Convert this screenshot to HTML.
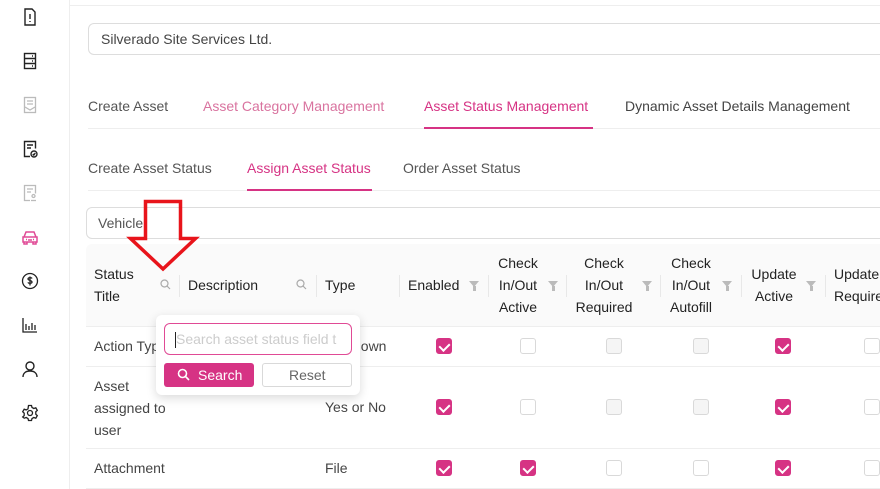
<!DOCTYPE html>
<html><head><meta charset="utf-8"><style>
*{box-sizing:border-box;margin:0;padding:0}
body{width:880px;height:489px;overflow:hidden;background:#fff;font-family:"Liberation Sans",sans-serif;font-size:14px;color:#333;position:relative}
.a{position:absolute}
.side{left:0;top:0;width:70px;height:489px;border-right:1px solid #eee}
.ic{position:absolute;left:21px;width:18px;height:18px}
.t{position:absolute;white-space:nowrap}
.cb{position:absolute;width:16px;height:16px;border:1px solid #d9d9d9;border-radius:3px;background:#fff}
.cb.on{background:#d63384;border-color:#d63384}
.cb.dis{background:#f5f5f5}
.cb.on::after{content:"";position:absolute;left:4px;top:2px;width:5px;height:8px;border:solid #fff;border-width:0 2px 2px 0;transform:rotate(45deg)}
.sep{position:absolute;top:275px;width:1px;height:22px;background:#e8e8e8}
.fl{position:absolute;width:0;height:0;border-left:5px solid transparent;border-right:5px solid transparent;border-top:6px solid #bbb}
.fl::after{content:"";position:absolute;left:-1.5px;top:-1px;width:3px;height:5px;background:#bbb}
.hl{position:absolute;left:86px;width:794px;height:1px;background:#eee}
</style></head><body>
<div class="a side"></div>
<div class="a" style="left:70px;top:5px;width:810px;height:1px;background:#eee"></div>
<svg class="ic" style="top:8px" viewBox="0 0 18 18" fill="none" stroke="#222" stroke-width="1.4"><path d="M4 1h7l3 3v13H4z"/><path d="M9 6v5M9 13v1"/></svg>
<svg class="ic" style="top:52px" viewBox="0 0 18 18" fill="none" stroke="#222" stroke-width="1.4"><rect x="3.5" y="1.5" width="11" height="15"/><path d="M3.5 6.5h11M3.5 11.5h11M11 4h1M11 9h1M11 14h1"/></svg>
<svg class="ic" style="top:96px" viewBox="0 0 18 18" fill="none" stroke="#bbb" stroke-width="1.3"><rect x="3.5" y="1.5" width="11" height="15"/><path d="M6 5h6M6 8h6M4 11l5 3 5-3"/></svg>
<svg class="ic" style="top:140px" viewBox="0 0 18 18" fill="none" stroke="#222" stroke-width="1.4"><path d="M9 16.5H3.5v-15h11v7"/><path d="M6 5h6M6 8h4"/><circle cx="13" cy="14" r="3"/><path d="M11.8 14l1 1 1.5-2"/></svg>
<svg class="ic" style="top:184px" viewBox="0 0 18 18" fill="none" stroke="#bbb" stroke-width="1.3"><path d="M9 16.5H3.5v-15h11v8"/><path d="M6 5h6M6 8h4"/><circle cx="12.5" cy="12" r="1.5"/><path d="M10 16.5h5"/></svg>
<svg class="ic" style="top:228px" viewBox="0 0 18 18" fill="none" stroke="#e04a95" stroke-width="1.5"><path d="M3 9l2-5h8l2 5M2 9h14v5H2zM3 14v2h3v-2M12 14v2h3v-2"/><path d="M5 11.5h1M12 11.5h1M7 12h4"/></svg>
<svg class="ic" style="top:272px" viewBox="0 0 18 18" fill="none" stroke="#222" stroke-width="1.3"><circle cx="9" cy="9" r="7.5"/><path d="M11 6.5c-.5-1-3.5-1.3-4 .3s4 1.5 4 3.2-3.5 1.7-4 .3M9 4.5v9"/></svg>
<svg class="ic" style="top:316px" viewBox="0 0 18 18" fill="none" stroke="#222" stroke-width="1.3"><path d="M2 2v14h14M5 14V8M8 14v-4M11 14V7M14 14v-5"/></svg>
<svg class="ic" style="top:360px" viewBox="0 0 18 18" fill="none" stroke="#222" stroke-width="1.4"><circle cx="9" cy="6" r="4"/><path d="M2 17c0-4 3-6 7-6s7 2 7 6"/></svg>
<svg class="ic" style="top:404px" viewBox="0 0 18 18" fill="none" stroke="#222" stroke-width="1.3"><circle cx="9" cy="9" r="2.5"/><path d="M7.5 1.5h3l.5 2 1.8 1 2-.7 1.5 2.6-1.5 1.4v2.4l1.5 1.4-1.5 2.6-2-.7-1.8 1-.5 2h-3l-.5-2-1.8-1-2 .7L1.7 13l1.5-1.4V9.2L1.7 7.8l1.5-2.6 2 .7 1.8-1z"/></svg>

<div class="a" style="left:88px;top:23px;width:800px;height:32px;border:1px solid #ddd;border-radius:6px"></div>
<div class="t" style="left:101px;top:31px;color:#444">Silverado Site Services Ltd.</div>

<div class="t" style="left:88px;top:98px;color:#555">Create Asset</div>
<div class="t" style="left:203px;top:98px;color:#d9739f">Asset Category Management</div>
<div class="t" style="left:424px;top:98px;color:#d63384">Asset Status Management</div>
<div class="t" style="left:625px;top:98px;color:#444">Dynamic Asset Details Management</div>
<div class="a" style="left:88px;top:128px;width:792px;height:1px;background:#eee"></div>
<div class="a" style="left:424px;top:127px;width:169px;height:2px;background:#d63384"></div>

<div class="t" style="left:88px;top:160px;color:#555">Create Asset Status</div>
<div class="t" style="left:247px;top:160px;color:#d63384">Assign Asset Status</div>
<div class="t" style="left:403px;top:160px;color:#555">Order Asset Status</div>
<div class="a" style="left:88px;top:190px;width:792px;height:1px;background:#eee"></div>
<div class="a" style="left:247px;top:189px;width:125px;height:2px;background:#d63384"></div>

<div class="a" style="left:86px;top:207px;width:800px;height:32px;border:1px solid #ddd;border-radius:6px"></div>
<div class="t" style="left:98px;top:215px;color:#555">Vehicle</div>

<div class="a" style="left:86px;top:244px;width:794px;height:82px;background:#fafafa;border-radius:6px 0 0 0"></div>
<div class="hl" style="top:326px"></div><div class="hl" style="top:366px"></div><div class="hl" style="top:448px"></div><div class="hl" style="top:488px"></div>
<div class="sep" style="left:179px"></div><div class="sep" style="left:316px"></div><div class="sep" style="left:399px"></div><div class="sep" style="left:488px"></div><div class="sep" style="left:566px"></div><div class="sep" style="left:660px"></div><div class="sep" style="left:741px"></div><div class="sep" style="left:825px"></div>
<div class="t" style="left:94px;top:263px;line-height:22px;color:#222">Status<br>Title</div>
<div class="t" style="left:188px;top:277px;color:#222">Description</div>
<div class="t" style="left:325px;top:277px;color:#222">Type</div>
<div class="t" style="left:408px;top:277px;color:#222">Enabled</div>
<div class="t" style="left:497px;top:252px;line-height:22px;text-align:center;width:42px;color:#222">Check<br>In/Out<br>Active</div>
<div class="t" style="left:574px;top:252px;line-height:22px;text-align:center;width:60px;color:#222">Check<br>In/Out<br>Required</div>
<div class="t" style="left:666px;top:252px;line-height:22px;text-align:center;width:50px;color:#222">Check<br>In/Out<br>Autofill</div>
<div class="t" style="left:748px;top:263px;line-height:22px;text-align:center;width:52px;color:#222">Update<br>Active</div>
<div class="t" style="left:834px;top:263px;line-height:22px;color:#222">Update<br>Required</div>
<svg class="a" style="left:160px;top:279px" width="11" height="11" viewBox="0 0 11 11" fill="none" stroke="#aaa" stroke-width="1.2"><circle cx="4.5" cy="4.5" r="3.5"/><path d="M7 7l3 3"/></svg>
<svg class="a" style="left:296px;top:279px" width="11" height="11" viewBox="0 0 11 11" fill="none" stroke="#aaa" stroke-width="1.2"><circle cx="4.5" cy="4.5" r="3.5"/><path d="M7 7l3 3"/></svg>
<div class="fl" style="left:469px;top:281px"></div><div class="fl" style="left:548px;top:281px"></div><div class="fl" style="left:642px;top:281px"></div><div class="fl" style="left:722px;top:281px"></div><div class="fl" style="left:806px;top:281px"></div>

<div class="t" style="left:94px;top:338px;color:#444">Action Typ</div>
<div class="t" style="left:353px;top:338px;color:#444">down</div>
<div class="t" style="left:94px;top:375px;line-height:22px;color:#444">Asset<br>assigned to<br>user</div>
<div class="t" style="left:325px;top:399px;color:#444">Yes or No</div>
<div class="t" style="left:94px;top:460px;color:#444">Attachment</div>
<div class="t" style="left:325px;top:460px;color:#444">File</div>

<div class="cb on" style="left:436px;top:338px"></div><div class="cb" style="left:520px;top:338px"></div><div class="cb dis" style="left:606px;top:338px"></div><div class="cb dis" style="left:693px;top:338px"></div><div class="cb on" style="left:775px;top:338px"></div><div class="cb" style="left:864px;top:338px"></div>
<div class="cb on" style="left:436px;top:399px"></div><div class="cb" style="left:520px;top:399px"></div><div class="cb dis" style="left:606px;top:399px"></div><div class="cb dis" style="left:693px;top:399px"></div><div class="cb on" style="left:775px;top:399px"></div><div class="cb" style="left:864px;top:399px"></div>
<div class="cb on" style="left:436px;top:460px"></div><div class="cb on" style="left:520px;top:460px"></div><div class="cb" style="left:606px;top:460px"></div><div class="cb" style="left:693px;top:460px"></div><div class="cb on" style="left:775px;top:460px"></div><div class="cb" style="left:864px;top:460px"></div>

<div class="a" style="left:156px;top:315px;width:204px;height:80px;background:#fff;border-radius:6px;box-shadow:0 3px 10px rgba(0,0,0,.15)"></div>
<div class="a" style="left:164px;top:323px;width:188px;height:32px;border:1px solid #e04a95;border-radius:6px;overflow:hidden"><span class="t" style="left:11px;top:7px;color:#ccc">Search asset status field t</span><span class="a" style="left:10px;top:8px;width:1px;height:16px;background:#222"></span></div>
<div class="a" style="left:164px;top:363px;width:90px;height:24px;background:#d63384;border-radius:3px"></div>
<svg class="a" style="left:177px;top:368px" width="13" height="13" viewBox="0 0 13 13" fill="none" stroke="#fff" stroke-width="1.6"><circle cx="5.5" cy="5.5" r="4"/><path d="M8.5 8.5l3.5 3.5"/></svg>
<div class="t" style="left:198px;top:367px;color:#fff">Search</div>
<div class="a" style="left:262px;top:363px;width:90px;height:24px;border:1px solid #d9d9d9;border-radius:3px"></div>
<div class="t" style="left:289px;top:367px;color:#666">Reset</div>

<svg class="a" style="left:126px;top:198px" width="74" height="76" viewBox="0 0 74 76"><path d="M19.5 3.5h35v37h15L37 71 4.5 40.5h15z" fill="none" stroke="#e8141b" stroke-width="3.5"/></svg>
</body></html>
